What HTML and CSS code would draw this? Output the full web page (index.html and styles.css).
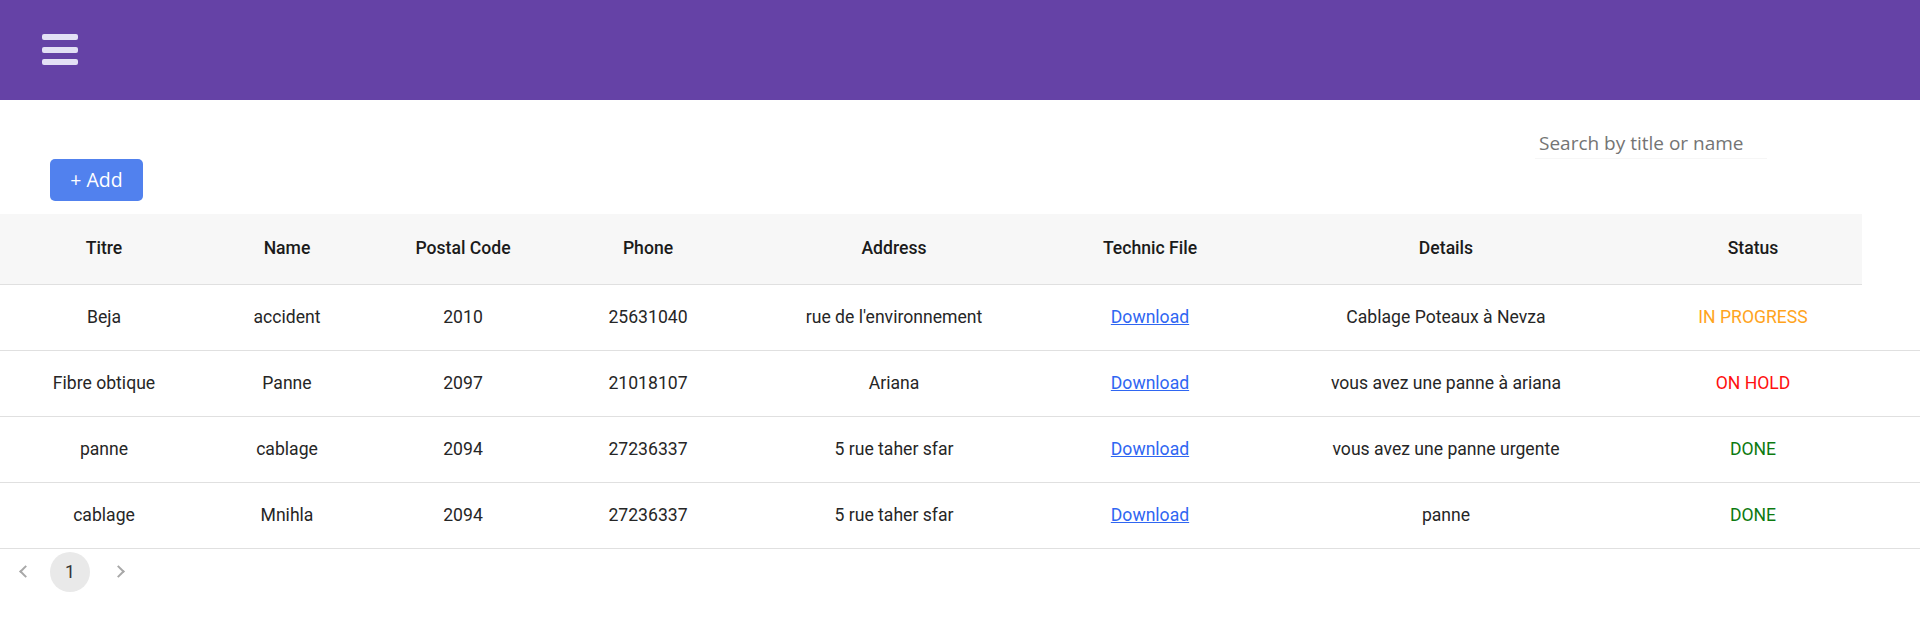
FILE: index.html
```html
<!DOCTYPE html>
<html lang="fr">
<head>
<meta charset="utf-8">
<title>Tasks</title>
<link rel="stylesheet" href="styles.css">
</head>
<body>
<header class="topbar">
  <button class="menu-btn" aria-label="menu">
    <span class="bar"></span><span class="bar"></span><span class="bar"></span>
  </button>
</header>
<main class="content">
  <div class="search-row">
    <input class="search" type="text" placeholder="Search by title or name">
  </div>
  <div class="actions">
    <button class="add-btn">+ Add</button>
  </div>
  <table class="grid">
    <colgroup>
      <col class="c1"><col class="c2"><col class="c3"><col class="c4"><col class="c5"><col class="c6"><col class="c7"><col class="c8"><col class="c9">
    </colgroup>
    <thead>
      <tr>
        <th>Titre</th><th>Name</th><th>Postal Code</th><th>Phone</th><th>Address</th><th>Technic File</th><th>Details</th><th>Status</th><th class="spacer"></th>
      </tr>
    </thead>
    <tbody>
      <tr>
        <td>Beja</td><td>accident</td><td>2010</td><td>25631040</td><td>rue de l'environnement</td><td><a href="#">Download</a></td><td>Cablage Poteaux à Nevza</td><td class="st progress">IN PROGRESS</td><td></td>
      </tr>
      <tr>
        <td>Fibre obtique</td><td>Panne</td><td>2097</td><td>21018107</td><td>Ariana</td><td><a href="#">Download</a></td><td>vous avez une panne à ariana</td><td class="st hold">ON HOLD</td><td></td>
      </tr>
      <tr>
        <td>panne</td><td>cablage</td><td>2094</td><td>27236337</td><td>5 rue taher sfar</td><td><a href="#">Download</a></td><td>vous avez une panne urgente</td><td class="st done">DONE</td><td></td>
      </tr>
      <tr>
        <td>cablage</td><td>Mnihla</td><td>2094</td><td>27236337</td><td>5 rue taher sfar</td><td><a href="#">Download</a></td><td>panne</td><td class="st done">DONE</td><td></td>
      </tr>
    </tbody>
  </table>
  <nav class="pager">
    <span class="arrow prev"></span>
    <span class="page">1</span>
    <span class="arrow next"></span>
  </nav>
</main>
</body>
</html>
```
FILE: styles.css
```css
* { box-sizing: border-box; }
html, body { margin: 0; padding: 0; background: #fff; }
body { font-family: Roboto, "Noto Sans", Arial, sans-serif; color: #212121; }

.topbar {
  height: 100px;
  background: #6542a6;
  display: flex;
  align-items: center;
  padding-left: 42px;
}
.menu-btn {
  display: flex;
  flex-direction: column;
  gap: 6.5px;
  padding: 0;
  margin: 0 0 1px 0;
  border: 0;
  background: transparent;
  width: 36px;
}
.menu-btn .bar {
  display: block;
  height: 6px;
  width: 36px;
  border-radius: 2px;
  background: #e3e0f5;
}

.search-row {
  display: flex;
  justify-content: flex-end;
  padding: 22px 153px 0 0;
}
.search {
  width: 232px;
  height: 37px;
  border: 0;
  border-bottom: 1px solid #f6f6f6;
  outline: none;
  padding: 5px 0 0 4px;
  font-family: "Open Sans", Arial, sans-serif;
  font-size: 19px;
  color: #333;
  background: transparent;
}
.search::placeholder { color: #747474; }

.actions { padding-left: 50px; }
.add-btn {
  width: 93px;
  height: 42px;
  border: 0;
  border-radius: 5px;
  background: #5181ee;
  color: #fff;
  font-family: "Open Sans", Arial, sans-serif;
  font-size: 19.5px;
  padding: 0 0 1px 0;
}

.grid {
  margin-top: 13px;
  width: 1920px;
  border-collapse: collapse;
  table-layout: fixed;
  font-size: 17.6px;
}
.c1 { width: 208px; } .c2 { width: 158px; } .c3 { width: 194px; } .c4 { width: 176px; }
.c5 { width: 316px; } .c6 { width: 196px; } .c7 { width: 396px; } .c8 { width: 218px; } .c9 { width: 58px; }

.grid th {
  height: 70px;
  background: #f7f7f7;
  font-weight: 500;
  color: #1b1b1b;
  text-align: center;
  border-bottom: 1px solid #e0e0e0;
  padding: 0 0 1px 0;
}
.grid th.spacer { background: #fff; border-bottom: 0; }
.grid td {
  height: 66px;
  text-align: center;
  border-bottom: 1px solid #e0e0e0;
  padding: 0 0 1px 0;
  color: #262626;
}
.grid a { color: #2f66f2; text-decoration: underline; }
.st.progress { color: #ffa41c; }
.st.hold { color: #ff1010; }
.st.done { color: #0d7a10; }

.pager {
  display: flex;
  align-items: center;
  height: 40px;
  margin-top: 3px;
  padding-left: 17px;
}
.page {
  width: 40px;
  height: 40px;
  border-radius: 50%;
  background: #e9e9e9;
  display: flex;
  align-items: center;
  justify-content: center;
  font-size: 17.6px;
  color: #333;
  margin: 0 20px 0 20px;
}
.arrow {
  display: block;
  width: 9px;
  height: 9px;
  border-left: 2px solid #a8a8a8;
  border-bottom: 2px solid #a8a8a8;
}
.arrow.prev { transform: rotate(45deg); margin-left: 4px; }
.arrow.next { transform: rotate(-135deg); margin-left: 4px; }
```
